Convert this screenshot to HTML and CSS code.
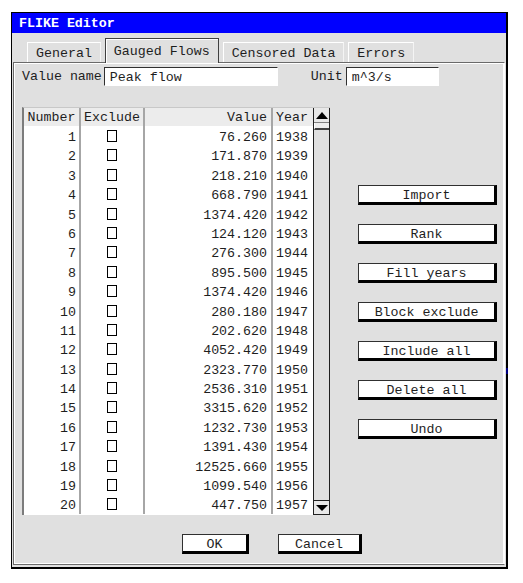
FILE: index.html
```html
<!DOCTYPE html>
<html>
<head>
<meta charset="utf-8">
<title>FLIKE Editor</title>
<link rel="stylesheet" href="styles.css">
</head>
<body>
<div class="window">
  <div class="titlebar">FLIKE Editor</div>
  <div class="tabs">
    <div class="tab">General</div>
    <div class="tab selected">Gauged Flows</div>
    <div class="tab">Censored Data</div>
    <div class="tab">Errors</div>
  </div>
  <div class="panel">
    <div class="namerow">
      <span class="label">Value name</span>
      <div class="field name-field">Peak flow</div>
      <span class="label unit-label">Unit</span>
      <div class="field unit-field">m^3/s</div>
    </div>
    <div class="main">
      <div class="table">
        <div class="grid">
          <div class="row head">
            <div class="c num">Number</div>
            <div class="c exc">Exclude</div>
            <div class="c val">Value</div>
            <div class="c yr">Year</div>
          </div>
          <div class="row"><div class="c num">1</div><div class="c exc"><span class="cb"></span></div><div class="c val">76.260</div><div class="c yr">1938</div></div>
          <div class="row"><div class="c num">2</div><div class="c exc"><span class="cb"></span></div><div class="c val">171.870</div><div class="c yr">1939</div></div>
          <div class="row"><div class="c num">3</div><div class="c exc"><span class="cb"></span></div><div class="c val">218.210</div><div class="c yr">1940</div></div>
          <div class="row"><div class="c num">4</div><div class="c exc"><span class="cb"></span></div><div class="c val">668.790</div><div class="c yr">1941</div></div>
          <div class="row"><div class="c num">5</div><div class="c exc"><span class="cb"></span></div><div class="c val">1374.420</div><div class="c yr">1942</div></div>
          <div class="row"><div class="c num">6</div><div class="c exc"><span class="cb"></span></div><div class="c val">124.120</div><div class="c yr">1943</div></div>
          <div class="row"><div class="c num">7</div><div class="c exc"><span class="cb"></span></div><div class="c val">276.300</div><div class="c yr">1944</div></div>
          <div class="row"><div class="c num">8</div><div class="c exc"><span class="cb"></span></div><div class="c val">895.500</div><div class="c yr">1945</div></div>
          <div class="row"><div class="c num">9</div><div class="c exc"><span class="cb"></span></div><div class="c val">1374.420</div><div class="c yr">1946</div></div>
          <div class="row"><div class="c num">10</div><div class="c exc"><span class="cb"></span></div><div class="c val">280.180</div><div class="c yr">1947</div></div>
          <div class="row"><div class="c num">11</div><div class="c exc"><span class="cb"></span></div><div class="c val">202.620</div><div class="c yr">1948</div></div>
          <div class="row"><div class="c num">12</div><div class="c exc"><span class="cb"></span></div><div class="c val">4052.420</div><div class="c yr">1949</div></div>
          <div class="row"><div class="c num">13</div><div class="c exc"><span class="cb"></span></div><div class="c val">2323.770</div><div class="c yr">1950</div></div>
          <div class="row"><div class="c num">14</div><div class="c exc"><span class="cb"></span></div><div class="c val">2536.310</div><div class="c yr">1951</div></div>
          <div class="row"><div class="c num">15</div><div class="c exc"><span class="cb"></span></div><div class="c val">3315.620</div><div class="c yr">1952</div></div>
          <div class="row"><div class="c num">16</div><div class="c exc"><span class="cb"></span></div><div class="c val">1232.730</div><div class="c yr">1953</div></div>
          <div class="row"><div class="c num">17</div><div class="c exc"><span class="cb"></span></div><div class="c val">1391.430</div><div class="c yr">1954</div></div>
          <div class="row"><div class="c num">18</div><div class="c exc"><span class="cb"></span></div><div class="c val">12525.660</div><div class="c yr">1955</div></div>
          <div class="row"><div class="c num">19</div><div class="c exc"><span class="cb"></span></div><div class="c val">1099.540</div><div class="c yr">1956</div></div>
          <div class="row"><div class="c num">20</div><div class="c exc"><span class="cb"></span></div><div class="c val">447.750</div><div class="c yr">1957</div></div>
        </div>
        <div class="scroll">
          <div class="sb-btn"><span class="tri up"></span></div>
          <div class="thumb"></div>
          <div class="track"></div>
          <div class="sb-btn down-btn"><span class="tri down"></span></div>
        </div>
      </div>
      <div class="actions">
        <div class="btn">Import</div>
        <div class="btn">Rank</div>
        <div class="btn">Fill years</div>
        <div class="btn">Block exclude</div>
        <div class="btn">Include all</div>
        <div class="btn">Delete all</div>
        <div class="btn">Undo</div>
      </div>
    </div>
    <div class="footer">
      <div class="btn ok">OK</div>
      <div class="btn cancel">Cancel</div>
    </div>
  </div>
  <span class="stray"></span>
</div>
</body>
</html>
```
FILE: styles.css
```css
* { box-sizing: border-box; }
html, body { margin: 0; padding: 0; background: #fff; }
body {
  padding: 12px 0 0 11px;
  font-family: "Liberation Mono", "DejaVu Sans Mono", monospace;
  font-size: 13.3px;
  color: #1e1e1e;
}
.window {
  position: relative;
  width: 497px;
  height: 557px;
  border: 1px solid #000;
  border-right-width: 2px;
  border-bottom-width: 2px;
  background: #e0e0e0;
  display: flex;
  flex-direction: column;
}
.titlebar {
  height: 20px;
  background: #0000ff;
  color: #fff;
  font-weight: bold;
  line-height: 22px;
  padding-left: 7px;
}
.tabs {
  height: 29px;
  display: flex;
  align-items: flex-end;
  gap: 4px;
  padding-left: 15px;
}
.tab {
  height: 20px;
  line-height: 22px;
  padding: 0 8px;
  border: 1px solid #fff;
  border-bottom: none;
  border-right-color: #f4f4f4;
  white-space: nowrap;
}
.tab.selected {
  position: relative;
  z-index: 1;
  height: 25px;
  line-height: 26px;
  margin-bottom: -1px;
  background: #e0e0e0;
  border-color: #404040;
  box-shadow: inset 1px 1px 0 #fff;
}
.panel {
  flex: 1;
  margin: 0 1px 2px 1px;
  border: 1px solid #6a6a6a;
  border-right-color: #fff;
  border-bottom-color: #6a6a6a;
  box-shadow: inset 1px 1px 0 #fff, inset -1px -1px 0 #fff;
  padding: 4px 8px 0 8px;
  display: flex;
  flex-direction: column;
}
.namerow {
  display: flex;
  align-items: flex-start;
  height: 19px;
}
.label { white-space: nowrap; line-height: 20px; }
.field {
  height: 19px;
  line-height: 19px;
  background: #fff;
  border: 1px solid #fff;
  border-top-color: #303030;
  border-left-color: #303030;
  padding-left: 5px;
  white-space: nowrap;
}
.name-field { width: 174px; margin-left: 2px; }
.unit-label { margin-left: 33px; }
.unit-field { width: 93px; margin-left: 3px; }
.main {
  display: flex;
  margin-top: 21px;
}
.table {
  display: flex;
  width: 308px;
  height: 408px;
  border-left: 2px solid #7c7c7c;
  border-top: 1px solid #c8c8c8;
}
.grid {
  flex: 1;
  background: #fff;
  overflow: hidden;
  display: flex;
  flex-direction: column;
}
.row {
  display: grid;
  grid-template-columns: 57px 64px 128px 40px;
  height: 19.4px;
  flex: none;
  line-height: 19.4px;
}
.row.head {
  height: 18px;
  line-height: 18px;
  background: #ececec;
}
.c {
  white-space: nowrap;
  overflow: hidden;
  padding-top: 2px;
}
.head .c { padding-top: 1px; }
.num, .exc, .val { border-right: 2px solid #a6a6a6; }
.num { text-align: right; padding-right: 3px; }
.exc { text-align: center; }
.val { text-align: right; padding-right: 4px; }
.yr { padding-left: 3px; }
.head .num { text-align: center; padding-right: 0; }
.cb {
  display: inline-block;
  width: 10px;
  height: 12px;
  border: 1px solid #000;
  background: #fff;
  vertical-align: -1px;
}
.scroll {
  width: 17px;
  display: flex;
  flex-direction: column;
  background: #e2e2e2;
  border-left: 1px solid #202020;
  border-right: 1px solid #202020;
}
.sb-btn {
  height: 15px;
  display: flex;
  justify-content: center;
  align-items: center;
  background: #e8e8e8;
  border-bottom: 1px solid #808080;
}
.down-btn {
  border-bottom: 1px solid #202020;
  border-top: 1px solid #202020;
  align-items: flex-end;
  padding-bottom: 3px;
}
.tri {
  width: 0;
  height: 0;
  border-left: 6px solid transparent;
  border-right: 6px solid transparent;
}
.tri.up { border-bottom: 7px solid #000; }
.tri.down { border-top: 6px solid #000; }
.thumb {
  height: 7px;
  background: #ececec;
  border-bottom: 2px solid #404040;
  border-left: 1px solid #fff;
}
.track {
  flex: 1;
  background: #e0e0e0;
}
.actions {
  display: flex;
  flex-direction: column;
  gap: 19px;
  margin-left: 28px;
  padding-top: 78px;
}
.btn {
  width: 139px;
  height: 20px;
  background: #fff;
  border: 1px solid #303030;
  border-right: 3px solid #000;
  border-bottom: 3px solid #000;
  text-align: center;
  line-height: 16px;
  padding-top: 2px;
  white-space: nowrap;
}
.footer {
  display: flex;
  gap: 29px;
  margin-top: 19px;
  padding-left: 160px;
}
.btn.ok { width: 67px; }
.btn.cancel { width: 84px; }
.stray {
  position: absolute;
  right: -2px;
  top: 355px;
  width: 2px;
  height: 6px;
  background: #000080;
}
```
